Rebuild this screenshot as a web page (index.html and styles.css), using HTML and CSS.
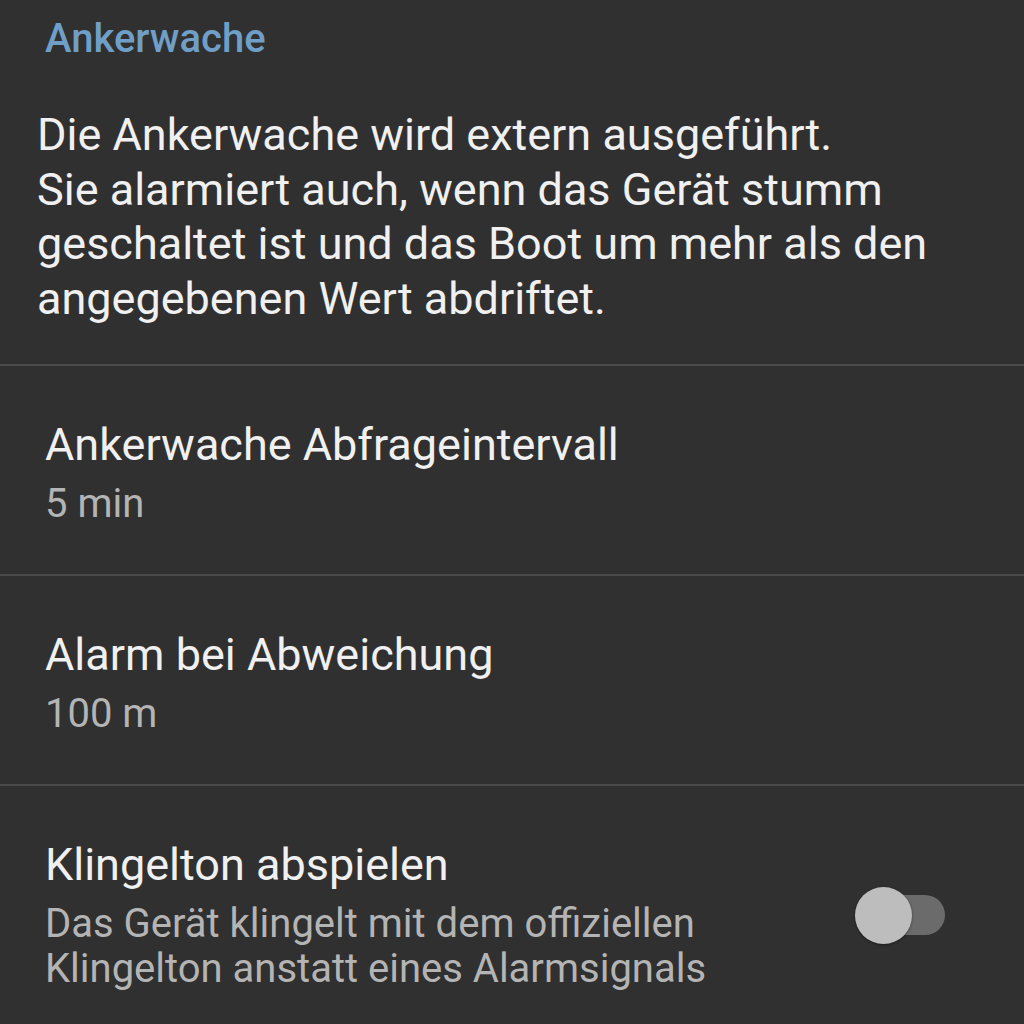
FILE: index.html
```html
<!DOCTYPE html>
<html lang="de">
<head>
    <meta charset="UTF-8">
    <title>Ankerwache</title>
    <link rel="stylesheet" href="styles.css">
</head>
<body>

    <div class="settings">
        <h2 class="category">Ankerwache</h2>
        <p class="intro">Die Ankerwache wird extern ausgeführt.<br>Sie alarmiert auch, wenn das Gerät stumm geschaltet ist und das Boot um mehr als den angegebenen Wert abdriftet.</p>

        <div class="pref">
            <div class="pref-text">
                <div class="pref-title">Ankerwache Abfrageintervall</div>
                <div class="pref-summary">5 min</div>
            </div>
        </div>

        <div class="pref">
            <div class="pref-text">
                <div class="pref-title">Alarm bei Abweichung</div>
                <div class="pref-summary">100 m</div>
            </div>
        </div>

        <div class="pref">
            <div class="pref-text">
                <div class="pref-title">Klingelton abspielen</div>
                <div class="pref-summary">Das Gerät klingelt mit dem offiziellen<br>Klingelton anstatt eines Alarmsignals</div>
            </div>
            <div class="switch">
                <span class="switch-track"></span>
                <span class="switch-thumb"></span>
            </div>
        </div>
    </div>

</body>
</html>
```

FILE: styles.css
```css
body {
    font-family: Roboto, 'Noto Sans', sans-serif;
    background-color: #303030;
    color: #f0f0f0;
    margin: 0;
}
.settings {
    display: flex;
    flex-direction: column;
}
.category {
    margin: 15px 0 0 0;
    padding-left: 45px;
    font-size: 40px;
    line-height: 48px;
    font-weight: 500;
    color: #6f9fc6;
}
.intro {
    margin: 45px 0 0 0;
    padding: 0 40px 38px 37px;
    font-size: 45px;
    line-height: 54.5px;
    border-bottom: 2px solid #4b4b4b;
}
.pref {
    display: flex;
    align-items: center;
    padding: 54px 79px 48px 45px;
    border-bottom: 2px solid #4b4b4b;
}
.pref-text {
    flex: 1;
}
.pref-title {
    font-size: 45px;
    line-height: 50px;
}
.pref-summary {
    margin-top: 11px;
    font-size: 40px;
    line-height: 45px;
    color: #b4b4b4;
}
.switch {
    position: relative;
    width: 90px;
    height: 57px;
}
.switch-track {
    position: absolute;
    left: 2px;
    right: 0;
    top: 8px;
    height: 40px;
    border-radius: 20px;
    background-color: #6b6b6b;
}
.switch-thumb {
    position: absolute;
    left: 0;
    top: 0;
    width: 57px;
    height: 57px;
    border-radius: 50%;
    background-color: #bdbdbd;
    box-shadow: 0 1px 3px rgba(0, 0, 0, 0.4);
}
```
